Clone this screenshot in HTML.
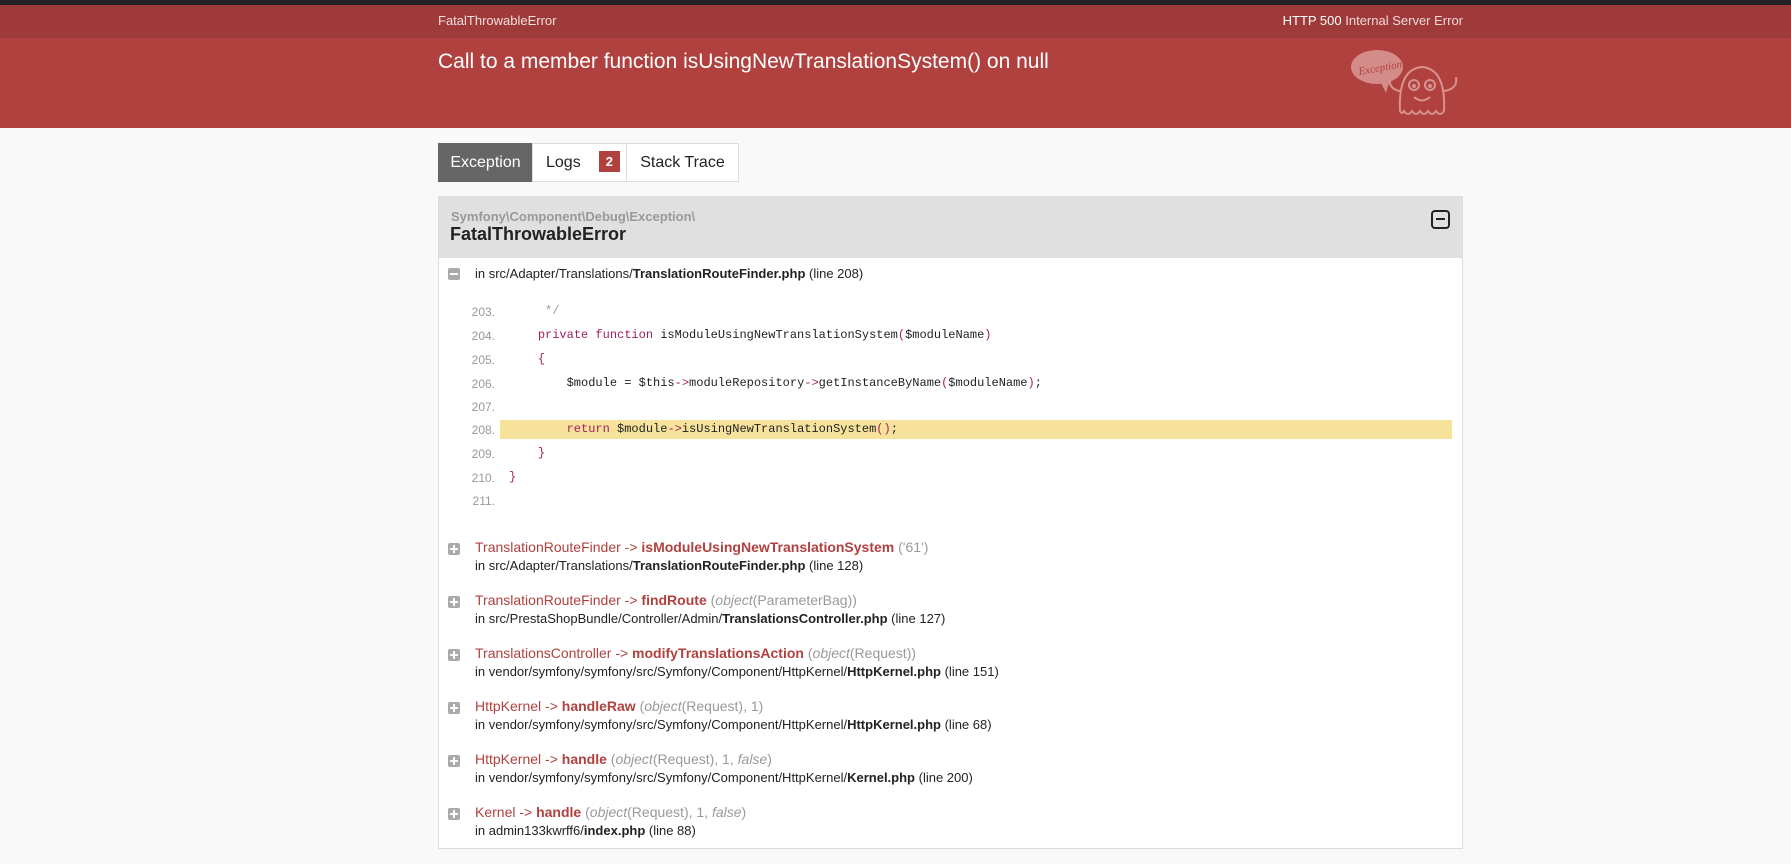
<!DOCTYPE html>
<html><head><meta charset="utf-8"><style>
body{margin:0;background:#f9f9f9;font-family:"Liberation Sans",Arial,sans-serif;width:1791px;height:864px;overflow:hidden;position:relative;color:#222}
.abs{position:absolute;white-space:nowrap}
.top{position:absolute;left:0;top:0;width:1791px;height:5px;background:#222}
.bar{position:absolute;left:0;top:5px;width:1791px;height:33px;background:#9e3a39}
.hdr{position:absolute;left:0;top:38px;width:1791px;height:90px;background:#b0413e}
.tab{position:absolute;top:143px;height:37px;line-height:37px;font-size:16px;border:1px solid #ddd;background:#fff;box-sizing:content-box;text-align:center}
.panel{position:absolute;left:438px;top:196px;width:1025px;height:653px;background:#fff;border:1px solid #ddd;box-sizing:border-box}
.ph{position:absolute;left:0;top:0;width:1023px;height:61px;background:#e0e0e0}
.ln{position:absolute;left:440px;width:55px;text-align:right;font-size:12px;color:#999}
.code{position:absolute;left:509px;font-family:"Liberation Mono",monospace;font-size:12px;color:#222;white-space:pre}
.kw{color:#a71d5d}.op{color:#a71d5d}
.ic{position:absolute;left:448px;width:12px;height:12px;background:#aaa;border-radius:2px}
.ic:before{content:"";position:absolute;left:2px;top:5px;width:8px;height:2px;background:#fff}
.ic.p:after{content:"";position:absolute;left:5px;top:2px;width:2px;height:8px;background:#fff}
.t1{position:absolute;left:475px;font-size:14px;color:#b0413e;white-space:nowrap}
.t1 b{font-weight:bold}
.t1 .g{color:#999}
.t2{position:absolute;left:475px;font-size:13px;color:#222;white-space:nowrap}
</style></head><body>
<div class="top"></div><div class="bar"></div><div class="hdr"></div>
<div class="abs" style="left:438px;top:13px;font-size:13px;color:#f4dede">FatalThrowableError</div>
<div class="abs" style="right:328px;top:13px;font-size:13px;color:#f2d8d8"><span style="color:#fff">HTTP 500</span> Internal Server Error</div>
<div class="abs" style="left:438px;top:50px;font-size:21px;color:#fff">Call to a member function isUsingNewTranslationSystem() on null</div>
<svg class="abs" style="left:1350px;top:47px" width="115" height="70" viewBox="0 0 115 70">
<ellipse cx="27" cy="20" rx="26" ry="17" fill="#d48c8a"/><path d="M30 34 L36 46 L40 33Z" fill="#d48c8a"/>
<text x="8" y="25" font-family="Liberation Serif" font-style="italic" font-size="11" fill="#b0413e" transform="rotate(-10 26 20)">Exception!</text>
<g fill="none" stroke="#d89290" stroke-width="2"><path d="M50 64 Q48 22 72 20 Q96 22 94 64 Q90 70 86 64 Q82 70 78 64 Q74 70 70 64 Q66 70 62 64 Q58 70 54 64 Q52 68 50 64Z"/><path d="M50 44 Q38 42 40 30 M94 44 Q108 42 106 30"/><circle cx="64" cy="38" r="5"/><circle cx="80" cy="38" r="5"/><path d="M64 50 Q72 57 80 50"/></g>
<circle cx="64" cy="39" r="2" fill="#d89290"/><circle cx="80" cy="39" r="2" fill="#d89290"/>
</svg>
<div class="tab" style="left:438px;width:93px;background:#666;color:#fff;border-color:#666">Exception</div>
<div class="tab" style="left:532px;width:93px;text-align:left"><span style="margin-left:13px">Logs</span><span style="display:inline-block;margin-left:18px;background:#b0413e;color:#fff;font-size:13px;font-weight:bold;line-height:21px;padding:0 7px;vertical-align:1px">2</span></div>
<div class="tab" style="left:626px;width:111px">Stack Trace</div>
<div class="panel"><div class="ph"></div>
<div class="abs" style="left:12px;top:12px;font-size:13px;font-weight:bold;color:#999">Symfony\Component\Debug\Exception\</div>
<div class="abs" style="left:11px;top:27px;font-size:18px;font-weight:bold;color:#222">FatalThrowableError</div>
<div class="abs" style="left:992px;top:13px;width:15px;height:15px;border:2px solid #222;border-radius:4px"><div style="position:absolute;left:3px;top:6px;width:9px;height:2px;background:#222"></div></div>
</div>
<div class="ic" style="top:268px"></div>
<div class="t2" style="top:266px">in src/Adapter/Translations/<b>TranslationRouteFinder.php</b> (line 208)</div>
<div style="position:absolute;left:500px;top:420px;width:952px;height:19px;background:#f7e29b"></div>
<div class="ln" style="top:305px">203.</div><div class="code" style="top:304px;color:#999">     */</div>
<div class="ln" style="top:329px">204.</div><div class="code" style="top:328px">    <span class="kw">private function</span> isModuleUsingNewTranslationSystem<span class="op">(</span>$moduleName<span class="op">)</span></div>
<div class="ln" style="top:353px">205.</div><div class="code" style="top:352px">    <span class="op">{</span></div>
<div class="ln" style="top:377px">206.</div><div class="code" style="top:376px">        $module = $this<span class="op">-&gt;</span>moduleRepository<span class="op">-&gt;</span>getInstanceByName<span class="op">(</span>$moduleName<span class="op">)</span>;</div>
<div class="ln" style="top:400px">207.</div>
<div class="ln" style="top:423px">208.</div><div class="code" style="top:422px">        <span class="kw">return</span> $module<span class="op">-&gt;</span>isUsingNewTranslationSystem<span class="op">()</span>;</div>
<div class="ln" style="top:447px">209.</div><div class="code" style="top:446px">    <span class="op">}</span></div>
<div class="ln" style="top:471px">210.</div><div class="code" style="top:470px"><span class="op">}</span></div>
<div class="ln" style="top:494px">211.</div>

<div class="ic p" style="top:543px"></div>
<div class="t1" style="top:539px">TranslationRouteFinder -&gt; <b>isModuleUsingNewTranslationSystem</b> <span class="g">('61')</span></div>
<div class="t2" style="top:558px">in src/Adapter/Translations/<b>TranslationRouteFinder.php</b> (line 128)</div>
<div class="ic p" style="top:596px"></div>
<div class="t1" style="top:592px">TranslationRouteFinder -&gt; <b>findRoute</b> <span class="g">(<i>object</i>(ParameterBag))</span></div>
<div class="t2" style="top:611px">in src/PrestaShopBundle/Controller/Admin/<b>TranslationsController.php</b> (line 127)</div>
<div class="ic p" style="top:649px"></div>
<div class="t1" style="top:645px">TranslationsController -&gt; <b>modifyTranslationsAction</b> <span class="g">(<i>object</i>(Request))</span></div>
<div class="t2" style="top:664px">in vendor/symfony/symfony/src/Symfony/Component/HttpKernel/<b>HttpKernel.php</b> (line 151)</div>
<div class="ic p" style="top:702px"></div>
<div class="t1" style="top:698px">HttpKernel -&gt; <b>handleRaw</b> <span class="g">(<i>object</i>(Request), 1)</span></div>
<div class="t2" style="top:717px">in vendor/symfony/symfony/src/Symfony/Component/HttpKernel/<b>HttpKernel.php</b> (line 68)</div>
<div class="ic p" style="top:755px"></div>
<div class="t1" style="top:751px">HttpKernel -&gt; <b>handle</b> <span class="g">(<i>object</i>(Request), 1, <i>false</i>)</span></div>
<div class="t2" style="top:770px">in vendor/symfony/symfony/src/Symfony/Component/HttpKernel/<b>Kernel.php</b> (line 200)</div>
<div class="ic p" style="top:808px"></div>
<div class="t1" style="top:804px">Kernel -&gt; <b>handle</b> <span class="g">(<i>object</i>(Request), 1, <i>false</i>)</span></div>
<div class="t2" style="top:823px">in admin133kwrff6/<b>index.php</b> (line 88)</div>
</body></html>
